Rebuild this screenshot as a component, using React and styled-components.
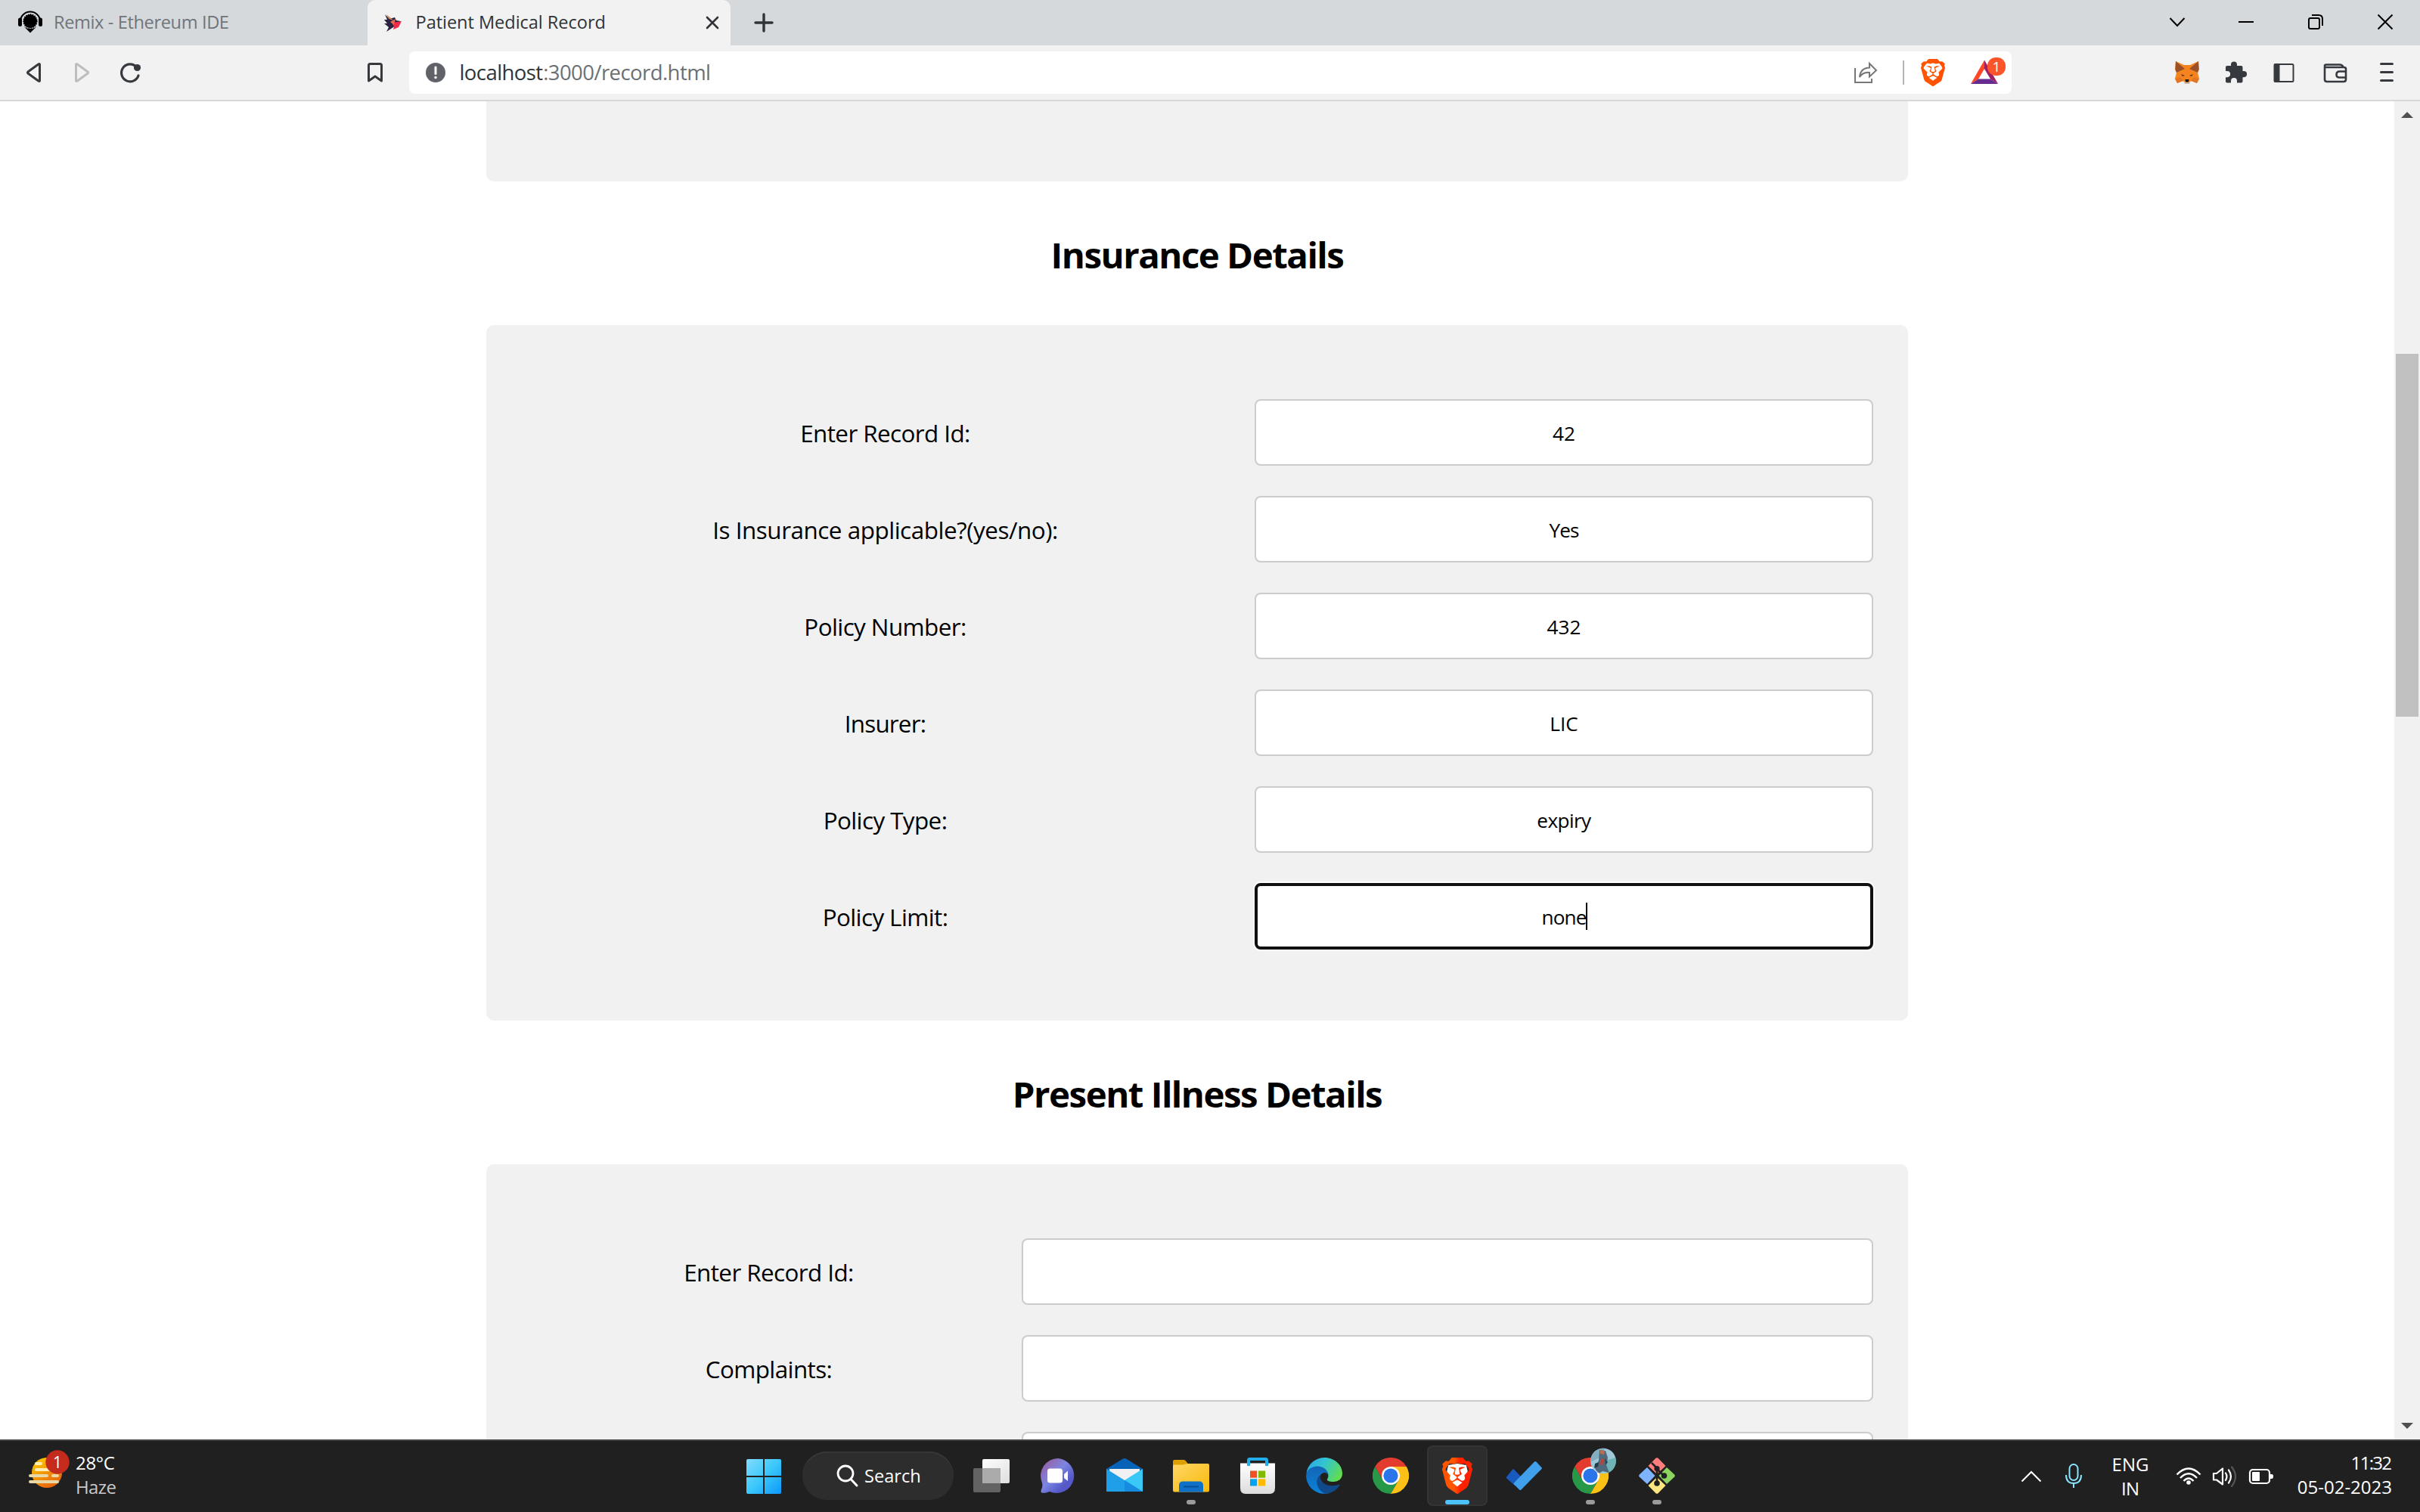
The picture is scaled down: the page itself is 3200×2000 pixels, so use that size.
import React from "react";
import styled, { createGlobalStyle } from "styled-components";
import { SiBrave } from "react-icons/si";

const Global = createGlobalStyle`
  html, body { margin: 0; padding: 0; background: #fff; overflow: hidden; }
  *, *::before, *::after { box-sizing: border-box; }
  body { font-family: "Open Sans", "Noto Sans", sans-serif; color: #000; }
  svg { display: block; flex: none; }
`;

const Window = styled.div`
  width: 3200px;
  height: 2000px;
  display: flex;
  flex-direction: column;
  overflow: hidden;
`;

/* ---------- browser chrome ---------- */
const TabStrip = styled.div`
  height: 60px;
  flex: none;
  display: flex;
  align-items: center;
  background: #d5d9dc;
`;
const Tab = styled.div`
  width: ${(p) => p.$width}px;
  height: 60px;
  display: flex;
  align-items: center;
  padding-left: ${(p) => p.$pad}px;
  background: ${(p) => (p.$active ? "#f2f2f2" : "transparent")};
  border-radius: ${(p) => (p.$active ? "10px 10px 0 0" : "0")};
`;
const Text = styled.span`
  flex: none;
  white-space: nowrap;
  font-size: ${(p) => p.$size}px;
  line-height: ${(p) => p.$line || 40}px;
  letter-spacing: ${(p) => p.$track || 0}px;
  color: ${(p) => p.$color || "#000"};
  margin-left: ${(p) => p.$left || 0}px;
  margin-right: ${(p) => -(p.$track || 0)}px;
  padding-bottom: ${(p) => p.$lift || 0}px;
`;
const Slot = styled.div`
  flex: none;
  margin-left: ${(p) => p.$left || 0}px;
`;
const Spacer = styled.div`
  flex: 1;
`;
const Toolbar = styled.div`
  height: 74px;
  flex: none;
  display: flex;
  align-items: center;
  background: #f2f2f2;
  border-bottom: 2px solid #d5d9dc;
`;
const AddressBar = styled.div`
  width: 2119px;
  height: 56px;
  margin-left: 34px;
  display: flex;
  align-items: center;
  background: #fff;
  border-radius: 8px;
`;
const Divider = styled.div`
  width: 2px;
  height: 32px;
  margin-left: 32px;
  background: #b1b6ba;
`;

/* ---------- page ---------- */
const Viewport = styled.div`
  height: 1770px;
  flex: none;
  display: flex;
  overflow: hidden;
`;
const Page = styled.main`
  width: 3166px;
  height: 1770px;
  overflow: hidden;
  display: flex;
  flex-direction: column;
  align-items: center;
`;
const Card = styled.section`
  width: 1880px;
  flex: none;
  background: #f1f1f1;
  border-radius: ${(p) => (p.$cut ? "0 0 10px 10px" : "10px")};
  height: ${(p) => (p.$height ? p.$height + "px" : "auto")};
  padding: ${(p) => (p.$cut ? "0" : "98px 46px 94px 40px")};
  display: flex;
  flex-direction: column;
  gap: 40px;
`;
const Heading = styled.h2`
  margin: 0;
  height: 190px;
  flex: none;
  padding-top: 4px;
  font-size: 47.4px;
  line-height: 186px;
  font-weight: 700;
  letter-spacing: -1.5px;
`;
const Row = styled.div`
  display: grid;
  grid-template-columns: ${(p) => p.$label}px 1fr;
  height: 88px;
  flex: none;
`;
const Label = styled.label`
  text-align: center;
  font-size: 31.4px;
  line-height: 88px;
  padding-top: 1px;
  padding-right: 1px;
  white-space: nowrap;
  letter-spacing: ${(p) => p.$track || -0.58}px;
`;
const Field = styled.div`
  height: 88px;
  background: #fff;
  border: 2px solid #ccc;
  border-radius: 8px;
  display: flex;
  justify-content: center;
  font-size: 26.2px;
  line-height: 86px;
  letter-spacing: ${(p) => p.$track || 0}px;
  ${(p) =>
    p.$focus &&
    `border: 4px solid #101010; line-height: 82px; box-shadow: 0 0 0 2px #fff;`}
`;
const Caret = styled.i`
  width: 2px;
  height: 36px;
  margin-top: 22px;
  margin-right: -2px;
  background: #000;
`;
const Scrollbar = styled.div`
  width: 34px;
  background: #f1f1f1;
  display: flex;
  flex-direction: column;
  align-items: center;
`;
const Thumb = styled.div`
  width: 30px;
  height: 480px;
  margin: 312px 0 934px;
  flex: none;
  background: #c1c1c1;
`;
const ArrowUp = styled.div`
  border: 8px solid transparent;
  border-top: 0;
  border-bottom-color: #505050;
  margin-top: 14px;
`;
const ArrowDown = styled.div`
  border: 8px solid transparent;
  border-bottom: 0;
  border-top-color: #505050;
`;

/* ---------- taskbar ---------- */
const Taskbar = styled.footer`
  height: 96px;
  flex: none;
  display: flex;
  align-items: center;
  background: #202020;
  border-top: 2px solid #424242;
  color: #fff;
`;
const Stack = styled.div`
  display: flex;
  flex-direction: column;
  align-items: ${(p) => p.$align || "flex-start"};
  width: ${(p) => (p.$width ? p.$width + "px" : "auto")};
  margin-left: ${(p) => p.$left || 0}px;
  padding-bottom: ${(p) => p.$lift || 0}px;
  flex: none;
`;
const SearchPill = styled.div`
  width: 200px;
  height: 64px;
  margin: 0 6px 2px 8px;
  border-radius: 32px;
  background: #2d2d2d;
  box-shadow: inset 0 2px 0 #373737;
  display: flex;
  align-items: center;
  flex: none;
`;
const AppSlot = styled.div`
  width: 88px;
  height: 94px;
  flex: none;
  display: flex;
  flex-direction: column;
  align-items: center;
`;
const AppTile = styled.div`
  width: 80px;
  height: 80px;
  margin-top: 6px;
  border-radius: 8px;
  display: flex;
  flex-direction: column;
  align-items: center;
  justify-content: flex-end;
  background: ${(p) => (p.$active ? "#2d2d2d" : "transparent")};
  box-shadow: ${(p) => (p.$active ? "inset 0 0 0 2px #343434" : "none")};
`;
const AppMark = styled.div`
  width: ${(p) => (p.$kind === "active" ? 32 : 12)}px;
  height: 6px;
  border-radius: 3px;
  margin: 8px 0 2px;
  background: ${(p) =>
    p.$kind === "active" ? "#4cc2ff" : p.$kind === "open" ? "#9a9a9a" : "transparent"};
`;

const Glyph = ({ box, children, left }) => {
  const [x, y, w, h] = box;
  return (
    <Slot $left={left}>
      <svg width={w} height={h} viewBox={`${x} ${y} ${w} ${h}`} fill="none">
        {children}
      </svg>
    </Slot>
  );
};

const Lion = ({ w, h, gradient, id }) => (
  <svg width={w} height={h} viewBox="1.8 0 20.4 24" preserveAspectRatio="none">
    <defs>
      <linearGradient id={id} x1="0" x2="1" y1="0" y2="0">
        <stop offset="0.4" stopColor={gradient[0]} />
        <stop offset="0.6" stopColor={gradient[1]} />
      </linearGradient>
    </defs>
    <path d="M6 5 12 4 18 5 19 9 17 16 12 20 7 16 5 9Z" fill="#fff" />
    <SiBrave size={24} fill={`url(#${id})`} />
  </svg>
);

const Chrome = () => (
  <svg width="48" height="48" viewBox="0 0 48 48">
    <path d="M3.2 12A24 24 0 0 1 44.8 12L24 12 13.6 30Z" fill="#e33b2e" />
    <path d="M24 48A24 24 0 0 1 3.2 12L13.6 30 24 36 34.4 30Z" fill="#279847" />
    <path d="M24 12H44.8A24 24 0 0 1 24 48L34.4 30Z" fill="#fbc116" />
    <circle cx="24" cy="24" r="12" fill="#fff" />
    <circle cx="24" cy="24" r="9.6" fill="#2a75ea" />
  </svg>
);

const apps = [
  {
    name: "task-view",
    icon: (
      <svg width="48" height="48" viewBox="0 0 48 48">
        <defs>
          <linearGradient id="tv" x1="0" y1="0" x2="1" y2="1">
            <stop stopColor="#fff" />
            <stop offset="1" stopColor="#dedede" />
          </linearGradient>
        </defs>
        <rect x="12" y="2" width="36" height="32" rx="2" fill="url(#tv)" />
        <rect x="0" y="14" width="36" height="32" rx="2" fill="#6f6f6f" fillOpacity=".86" />
        <path d="M12 14H36V34H12Z" fill="#ababab" />
      </svg>
    ),
  },
  {
    name: "chat",
    icon: (
      <svg width="48" height="48" viewBox="0 0 48 48">
        <defs>
          <linearGradient id="ch" x1="0.1" y1="0.2" x2="0.7" y2="0.8">
            <stop stopColor="#9465ae" />
            <stop offset=".5" stopColor="#7c86e2" />
            <stop offset="1" stopColor="#5558c8" />
          </linearGradient>
        </defs>
        <path d="M24 1A23 23 0 1 1 13 45C8 47 5 47 2.500 46.500 1 46 1.500 44 2 42 4 38 3.500 35 2.500 32A23 23 0 0 1 24 1Z" fill="url(#ch)" />
        <rect x="10" y="14.500" width="20" height="19" rx="3.500" fill="#fff" />
        <path d="M32 22 37 17.500V31L32 27Z" fill="#fff" />
      </svg>
    ),
  },
  {
    name: "mail",
    icon: (
      <svg width="48" height="48" viewBox="0 0 48 48">
        <path d="M0 15 22 1.500Q24 0.500 26 1.500L48 15V24H0Z" fill="#0763b8" />
        <path d="M4 15H44V30L24 34 4 30Z" fill="#f1f1f3" />
        <path d="M48 15V45H0Z" fill="#3ac8f6" />
        <path d="M4 15H44L24 29.500Z" fill="#f1f1f3" />
        <path d="M0 15 48 45H0Z" fill="#1f9fe8" />
        <path d="M24 30 48 45H24Z" fill="#178be0" />
      </svg>
    ),
  },
  {
    name: "explorer",
    mark: "open",
    icon: (
      <svg width="48" height="48" viewBox="0 0 48 48">
        <defs>
          <linearGradient id="fo" x1="0" y1="0" x2="1" y2="1">
            <stop stopColor="#ffd766" />
            <stop offset="1" stopColor="#fab90a" />
          </linearGradient>
        </defs>
        <path d="M0 5Q0 3 2 3H14Q16 3 17 4.500L20 8.500 16 14H0Z" fill="#dda000" />
        <path d="M0 11Q0 9.500 2 9.500H13L19 8H46Q48 8 48 10V43Q48 45.500 46 45.500H2Q0 45.500 0 43Z" fill="url(#fo)" />
        <path d="M8 45.500V37Q8 31.500 13 31.500H35Q40 31.500 40 37V45.500Z" fill="#0e70c8" />
        <path d="M15 38.500H33" stroke="#0b4f93" strokeWidth="2.200" strokeLinecap="round" />
      </svg>
    ),
  },
  {
    name: "store",
    icon: (
      <svg width="48" height="48" viewBox="0 0 48 48">
        <defs>
          <linearGradient id="st" x1="0" y1="0" x2="0" y2="1">
            <stop stopColor="#fff" />
            <stop offset="1" stopColor="#dcdcdc" />
          </linearGradient>
        </defs>
        <path d="M1 7.500H47V40Q47 48 40 48H8Q1 48 1 40Z" fill="url(#st)" />
        <path d="M12 11V3.500Q12 2 13.500 2H34.500Q36 2 36 3.500V11" fill="none" stroke="#22aeea" strokeWidth="4" />
        <path d="M14 17.500h9.200v9.200H14z" fill="#f25022" />
        <path d="M25 17.500h9.200v9.200H25z" fill="#7fba00" />
        <path d="M14 28.300h9.200v9.200H14z" fill="#00a4ef" />
        <path d="M25 28.300h9.200v9.200H25z" fill="#ffb900" />
      </svg>
    ),
  },
  {
    name: "edge",
    icon: (
      <svg width="48" height="48" viewBox="0 0 48 48">
        <defs>
          <linearGradient id="e1" x1="0" y1="0.2" x2="1" y2="0.6">
            <stop stopColor="#2aa9e8" />
            <stop offset=".45" stopColor="#34c4d0" />
            <stop offset="1" stopColor="#62dd4e" />
          </linearGradient>
          <linearGradient id="e2" x1="0" y1="0" x2="0" y2="1">
            <stop stopColor="#1464b4" />
            <stop offset="1" stopColor="#0a84dc" />
          </linearGradient>
        </defs>
        <path d="M0.500 21A24 23 0 0 1 24 0C38 0 48 10 48 21 48 28 43 32 36 32 31 32 27 30.500 28 28.500 30 26 30 22 27 18 22 11 8 11 0.500 21Z" fill="url(#e1)" />
        <path d="M0.500 21C2 15 9 11.500 15 11.500 23 11.500 29.500 17 29.500 23 27 18 19 19 18 27 17 37 26 46.500 32 46.500A24 24 0 0 1 0.300 27Q0 24 .5 21Z" fill="url(#e2)" />
        <path d="M18.500 23C12 28 13 40 22 46 24 47.500 28 48 31 47 37 45 41 42 44 37.500 45 36 44 35.500 42.500 36 31 40 18 35 18.500 23Z" fill="#114a8b" />
      </svg>
    ),
  },
  { name: "chrome", icon: <Chrome /> },
  {
    name: "brave",
    mark: "active",
    icon: <Lion id="lionTask" w={40} h={48} gradient={["#ff5500", "#ff2000"]} />,
  },
  {
    name: "todo",
    icon: (
      <svg width="48" height="48" viewBox="0 0 48 48">
        <path d="M1.200 25.500 9 15.800Q10 14.800 11 15.800L21 26 12 37 1.200 27.500Q0.300 26.500 1.200 25.500Z" fill="#185abd" />
        <path d="M11 33.500 38 5.600Q39.200 4.600 40.400 5.600L47.300 12.900Q48.300 14 47.300 15.200L20.500 42.500Q19.300 43.600 18.100 42.500L11 35.500Q10.200 34.500 11 33.500Z" fill="#41a0ec" />
      </svg>
    ),
  },
  {
    name: "chrome-profile",
    mark: "open",
    icon: (
      <svg width="48" height="48" viewBox="0 0 48 48" overflow="visible">
        <Chrome />
        <clipPath id="av">
          <circle cx="41" cy="4.500" r="16.800" />
        </clipPath>
        <g clipPath="url(#av)">
          <rect x="24" y="-13" width="34" height="36" fill="#9fc9da" />
          <path d="M24 -13H44L36 0 24 6Z" fill="#84adc0" />
          <path d="M44 4 58 0V23H46Z" fill="#6fb3b6" />
          <path d="M36 -10 44 -9 47 0 45 10 49 20 40 18 34 22 30 14 35 4Z" fill="#4e6a7c" />
          <path d="M37 -10 43 -9 42 -4 37 -5Z" fill="#b96f4d" />
          <path d="M38 1 42 2 41 10 37 9Z" fill="#b5453b" />
          <path d="M30 8 35 6 34 12 29 14Z" fill="#253b4c" />
          <path d="M43 1 47 6 44 10Z" fill="#2c4459" />
          <path d="M26 15 34 19 30 22Z" fill="#e4ecec" />
        </g>
      </svg>
    ),
  },
  {
    name: "git",
    mark: "open",
    icon: (
      <svg width="48" height="48" viewBox="0 0 48 48">
        <path d="M22.500 .8Q24 -.5 25.500 .8L35.500 11 24 22 12.500 11Z" fill="#ff7d7d" />
        <path d="M11 13 21.500 24 11 35 .8 25.500Q-.4 24 .8 22.500Z" fill="#80b3ff" />
        <path d="M37 13 47.200 22.500Q48.400 24 47.200 25.500L37 35 26.500 24Z" fill="#8dd35f" />
        <path d="M24 26 35.500 37 25.500 47.200Q24 48.500 22.500 47.200L12.500 37Z" fill="#ffe680" />
        <g stroke="#202020" strokeWidth="2.600" fill="none">
          <path d="M17 7 24 14V34M24 15 33 24" />
        </g>
        <circle cx="24" cy="14.500" r="3.600" fill="#202020" />
        <circle cx="33.500" cy="24" r="3.800" fill="#202020" />
        <circle cx="24" cy="34" r="3.800" fill="#202020" />
      </svg>
    ),
  },
];

const insurance = [
  { label: "Enter Record Id:", value: "42" },
  { label: "Is Insurance applicable?(yes/no):", track: -0.46, value: "Yes", valueTrack: -1 },
  { label: "Policy Number:", value: "432" },
  { label: "Insurer:", value: "LIC", track: -0.8 },
  { label: "Policy Type:", value: "expiry", valueTrack: -0.6 },
  { label: "Policy Limit:", value: "none", valueTrack: -0.9, focus: true },
];
const illness = ["Enter Record Id:", "Complaints:", ""];

const ink = "#363a3e";

export default function App() {
  return (
    <Window>
      <Global />
      <TabStrip>
        <Tab $width={486} $pad={24}>
          <Glyph box={[24, 14, 32, 32]}>
            <path d="M27 28A13 12.500 0 0 1 53 28" stroke="#000" strokeWidth="2" />
            <circle cx="40" cy="28" r="9" fill="#000" />
            <circle cx="40" cy="28" r="9" stroke="#000" strokeWidth="1.500" strokeDasharray="1.500 1.500" />
            <rect x="24" y="23.500" width="5" height="11.500" rx="2.500" fill="#000" />
            <rect x="51" y="23.500" width="5" height="11.500" rx="2.500" fill="#000" />
            <path d="M32 35.500Q40 40.500 48 35.500L40 43.500Z" fill="#000" />
          </Glyph>
          <Text $size={23.6} $color="#70757a" $left={15} $lift={3} $track={-0.38}>Remix - Ethereum IDE</Text>
        </Tab>
        <Tab $width={480} $pad={20} $active>
          <Glyph box={[506, 14, 26, 32]}>
            <path d="M509 19 515 25 522 23 524 27 530 28 524 33 520 36 511 42 514 36 508 31 512 31 508 26 512 26Z" fill="#2a2344" />
            <path d="M511 19 517 24 520 27 514 25Z" fill="#d4895c" />
            <path d="M518 30 526 29 531 28 527 36 520 39 521 35Z" fill="#f02b4a" />
            <path d="M516 29 523 25 521 33Z" fill="#e66a45" />
          </Glyph>
          <Text $size={23.6} $color="#303438" $left={17.5} $lift={3} $track={-0.06}>Patient Medical Record</Text>
          <Spacer />
          <Glyph box={[933, 21, 18, 18]}>
            <path d="M935 23 949 37M949 23 935 37" stroke="#303438" strokeWidth="2.600" strokeLinecap="round" />
          </Glyph>
          <Slot $left={15} />
        </Tab>
        <Glyph box={[997, 17, 26, 26]} left={31}>
          <path d="M1010 19V41M999 30H1021" stroke="#303438" strokeWidth="3.400" strokeLinecap="round" />
        </Glyph>
        <Spacer />
        <Glyph box={[2868, 18, 22, 24]}>
          <path d="M2869.500 24 2879 34 2888.500 24" stroke="#000" strokeWidth="2" />
        </Glyph>
        <Glyph box={[2960, 18, 20, 24]} left={70}>
          <path d="M2960 29H2980" stroke="#000" strokeWidth="2" />
        </Glyph>
        <Glyph box={[3052, 18, 20, 24]} left={72}>
          <rect x="3053" y="24" width="14" height="14" rx="2" stroke="#000" strokeWidth="2" />
          <path d="M3057 20H3066Q3071 20 3071 25V34" stroke="#000" strokeWidth="2" />
        </Glyph>
        <Glyph box={[3143, 18, 22, 24]} left={71}>
          <path d="M3144.500 19.500 3163.500 38.500M3163.500 19.500 3144.500 38.500" stroke="#000" strokeWidth="2" />
        </Glyph>
        <Slot $left={35} />
      </TabStrip>

      <Toolbar>
        <Glyph box={[34, 80, 22, 32]} left={34}>
          <path d="M52.500 85.500V106.500Q52.500 108 51 107.200L37 97Q36 96 37 95L51 84.800Q52.500 84 52.500 85.500Z" stroke={ink} strokeWidth="3" />
        </Glyph>
        <Glyph box={[98, 80, 22, 32]} left={42}>
          <path d="M100.500 85.500V106.500Q100.500 108 102 107.200L116 97Q117 96 116 95L102 84.800Q100.500 84 100.500 85.500Z" stroke="#bcbdbe" strokeWidth="3" />
        </Glyph>
        <Glyph box={[158, 80, 30, 32]} left={38}>
          <path d="M178.500 85.800A11.500 11.500 0 1 0 183 99" stroke={ink} strokeWidth="3.200" strokeLinecap="round" transform="translate(0 1)" />
          <circle cx="181.500" cy="89.500" r="4.600" fill={ink} />
        </Glyph>
        <Glyph box={[485, 80, 22, 32]} left={297}>
          <path d="M487.500 86.500Q487.500 84.500 489.500 84.500H502.500Q504.500 84.500 504.500 86.500V107L496 101 487.500 107Z" stroke={ink} strokeWidth="3" strokeLinejoin="round" />
        </Glyph>
        <AddressBar>
          <Glyph box={[563, 82, 26, 28]} left={22}>
            <circle cx="576" cy="96" r="13" fill="#5f6368" />
            <path d="M576 89V97.500" stroke="#fff" strokeWidth="3" strokeLinecap="round" />
            <circle cx="576" cy="102.500" r="1.800" fill="#fff" />
          </Glyph>
          <Text $size={27.5} $color="#303438" $left={18.5} $lift={1} $track={-0.57}>localhost</Text>
          <Text $size={27.5} $color="#6b7075" $lift={1} $track={-0.57}>:3000/record.html</Text>
          <Spacer />
          <Glyph box={[2450, 80, 34, 32]}>
            <path d="M2453 90V109H2475V104" stroke="#777" strokeWidth="2" />
            <path d="M2459 102Q2460 90 2472 89.500V84L2481 93 2472 101.500V96Q2463 95 2459 102Z" stroke="#777" strokeWidth="2" strokeLinejoin="miter" />
          </Glyph>
          <Divider />
          <Slot $left={22}>
            <Lion id="lionBar" w={32} h={36} gradient={["#ff5500", "#ff5000"]} />
          </Slot>
          <Glyph box={[2606, 68, 48, 56]} left={34}>
            <path d="M2624 79.500 2606 111 2616 104.500 2624 91Z" fill="#ff4724" />
            <path d="M2624 79.500 2642 111 2632 104.500 2624 91Z" fill="#9e1f63" />
            <path d="M2606 111H2642L2632 104.500H2616Z" fill="#662d91" />
            <rect x="2628" y="76" width="24" height="24" rx="11" fill="#fb542b" />
            <text x="2640" y="95" textAnchor="middle" fontSize="19" fill="#fff">1</text>
          </Glyph>
          <Slot $left={6} />
        </AddressBar>
        <Glyph box={[2874, 78, 36, 36]} left={214}>
          <path d="M2877 81 2888 86H2896L2907 81 2908 92 2906 96 2908 104 2905 110 2898 107 2892 110 2886 107 2879 110 2876 104 2878 96 2876 92Z" fill="#f5841f" />
          <path d="M2877 81 2889 91 2878 96 2876.500 92Z" fill="#9b5127" />
          <path d="M2907 81 2895 91 2906 96 2907.500 92Z" fill="#9b5127" />
          <path d="M2876 104 2883 102 2887 107 2879 110ZM2908 104 2901 102 2897 107 2905 110Z" fill="#e17726" />
          <path d="M2884 98 2889 100 2886 101ZM2900 98 2895 100 2898 101Z" fill="#4a342a" />
          <path d="M2887 107 2890 109H2894L2897 107 2895 111H2889Z" fill="#c9b8a8" />
          <path d="M2889.500 105H2894.500L2894 108.500H2890Z" fill="#161616" />
        </Glyph>
        <Glyph box={[2942, 80, 30, 32]} left={32}>
          <path d="M2945 87H2950V85.500A4 4 0 0 1 2958 85.500V87H2963.500Q2965.500 87 2965.500 89V94H2967A4 4 0 0 1 2967 102.200H2965.500V107.500Q2965.500 109.500 2963.500 109.500H2958V107A4 4 0 0 0 2950 107V109.500H2945Q2943 109.500 2943 107.500V102.200H2945A4 4 0 0 0 2945 94H2943V89Q2943 87 2945 87Z" fill={ink} />
        </Glyph>
        <Glyph box={[3006, 80, 28, 32]} left={34}>
          <rect x="3007.500" y="85" width="25" height="23" rx="1.500" stroke={ink} strokeWidth="2" />
          <rect x="3007" y="84.500" width="7.500" height="24" fill={ink} />
        </Glyph>
        <Glyph box={[3071, 80, 34, 32]} left={37}>
          <path d="M3074 88V105Q3074 108 3077 108H3099Q3102 108 3102 105V91Q3102 89 3099 89H3076Q3074 89 3074 87 3074 85.500 3076 85.500H3094Q3097 85.500 3098.500 88.500" stroke={ink} strokeWidth="2.600" />
          <path d="M3102 94.500H3093.500Q3089.500 94.500 3089.500 98.700 3089.500 102.500 3093.500 102.500H3102" stroke={ink} strokeWidth="2.600" />
        </Glyph>
        <Glyph box={[3146, 80, 20, 32]} left={41}>
          <path d="M3148.500 84.500H3163.500M3148.500 95.500H3163.500M3148.500 106.500H3163.500" stroke={ink} strokeWidth="3" strokeLinecap="round" />
        </Glyph>
      </Toolbar>

      <Viewport>
        <Page>
          <Card $cut $height={106} />
          <Heading>Insurance Details</Heading>
          <Card>
            {insurance.map((row) => (
              <Row key={row.label} $label={976}>
                <Label $track={row.track}>{row.label}</Label>
                <Field $focus={row.focus} $track={row.valueTrack}>
                  <span>{row.value}</span>
                  {row.focus && <Caret />}
                </Field>
              </Row>
            ))}
          </Card>
          <Heading>Present Illness Details</Heading>
          <Card>
            {illness.map((label) => (
              <Row key={label} $label={668}>
                <Label>{label}</Label>
                <Field />
              </Row>
            ))}
          </Card>
        </Page>
        <Scrollbar>
          <ArrowUp />
          <Thumb />
          <ArrowDown />
        </Scrollbar>
      </Viewport>

      <Taskbar>
        <Glyph box={[36, 1910, 58, 86]} left={36}>
          <defs>
            <linearGradient id="sun" x1="0" y1="0" x2="0.6" y2="1">
              <stop stopColor="#ffd400" />
              <stop offset="1" stopColor="#e8650c" />
            </linearGradient>
          </defs>
          <circle cx="62" cy="1948" r="20" fill="url(#sun)" />
          <g stroke="#ead9a8" strokeWidth="4" strokeLinecap="round">
            <path d="M48 1936H54M48 1944H70" stroke="#fdeeb8" />
            <path d="M40 1952H62M70 1952H76M40 1960H76" />
          </g>
          <circle cx="76" cy="1934" r="15.700" fill="#c42b1c" />
          <text x="76" y="1941.500" textAnchor="middle" fontSize="21" fill="#fff">1</text>
        </Glyph>
        <Stack $left={6} $width={60} $lift={4}>
          <Text $size={24} $line={32} $color="#fff" $track={-0.3}>28°C</Text>
          <Text $size={24} $line={32} $color="#c8c8c8" $track={-0.6}>Haze</Text>
        </Stack>
        <Slot $left={805}>
          <AppSlot>
            <svg width="48" height="94" viewBox="985 1906 48 94">
              <defs>
                <linearGradient id="win" gradientUnits="userSpaceOnUse" x1="986" y1="1930" x2="1033" y2="1976">
                  <stop stopColor="#84dcff" />
                  <stop offset=".5" stopColor="#3cc8fb" />
                  <stop offset="1" stopColor="#0c98fa" />
                </linearGradient>
              </defs>
              <path d="M989 1930H1009V1952H987V1932Q987 1930 989 1930ZM1011 1930H1031Q1033 1930 1033 1932V1952H1011ZM987 1954H1009V1976H989Q987 1976 987 1974ZM1011 1954H1033V1974Q1033 1976 1031 1976H1011Z" fill="url(#win)" />
            </svg>
          </AppSlot>
        </Slot>
        <SearchPill>
          <Glyph box={[1105, 1936, 32, 32]} left={44}>
            <circle cx="1118" cy="1949" r="10" stroke="#fff" strokeWidth="2.800" />
            <path d="M1125 1956.500 1133 1965" stroke="#fff" strokeWidth="3" strokeLinecap="round" />
          </Glyph>
          <Text $size={23.6} $color="#fff" $left={6}>Search</Text>
        </SearchPill>
        {apps.map((app) => (
          <AppSlot key={app.name}>
            <AppTile $active={app.mark === "active"}>
              {app.icon}
              <AppMark $kind={app.mark} />
            </AppTile>
          </AppSlot>
        ))}
        <Spacer />
        <Glyph box={[2672, 1936, 28, 32]}>
          <path d="M2673.500 1958.500 2686 1946 2698.500 1958.500" stroke="#fff" strokeWidth="2" />
        </Glyph>
        <Glyph box={[2730, 1934, 24, 38]} left={30}>
          <g stroke="#8ae4ff" strokeWidth="2">
            <rect x="2736.500" y="1937" width="11" height="21" rx="5.500" />
            <path d="M2732 1951Q2732 1962 2742 1962 2752 1962 2752 1951M2742 1962V1968" />
          </g>
        </Glyph>
        <Stack $left={31} $width={64} $align="center">
          <Text $size={24} $line={32} $color="#fff">ENG</Text>
          <Text $size={24} $line={32} $color="#fff" $track={-0.6}>IN</Text>
        </Stack>
        <Glyph box={[2876, 1936, 36, 32]} left={27}>
          <g stroke="#fff" strokeWidth="2.400">
            <path d="M2878.500 1949.500Q2894 1933.500 2909.500 1949.500" />
            <path d="M2883 1954Q2894 1942.500 2905 1954" />
            <path d="M2887.500 1958Q2894 1951 2900.500 1958" />
          </g>
          <circle cx="2894" cy="1960" r="2.800" fill="#fff" />
        </Glyph>
        <Glyph box={[2924, 1936, 36, 32]} left={12}>
          <path d="M2927 1948H2931L2939 1941.500V1962.500L2931 1956.500H2927Z" stroke="#fff" strokeWidth="2.200" strokeLinejoin="round" />
          <path d="M2943 1947.500Q2946 1952 2943 1957M2947 1943.500Q2953 1952 2947 1960.500" stroke="#fff" strokeWidth="2.200" strokeLinecap="round" />
          <path d="M2951 1939.500Q2961 1952 2951 1965" stroke="#555" strokeWidth="2.200" strokeLinecap="round" />
        </Glyph>
        <Glyph box={[2973, 1936, 34, 32]} left={13}>
          <rect x="2975" y="1943" width="26" height="18" rx="4" stroke="#fff" strokeWidth="2.200" />
          <rect x="2978" y="1946" width="10" height="12" rx="1" fill="#fff" />
          <path d="M3002 1949H3004Q3006 1949 3006 1952 3006 1955 3004 1955H3002Z" fill="#fff" />
        </Glyph>
        <Stack $left={29} $width={127} $align="flex-end" $lift={4}>
          <Text $size={24} $line={32} $color="#fff" $track={-1.7}>11:32</Text>
          <Text $size={24} $line={32} $color="#fff">05-02-2023</Text>
        </Stack>
        <Slot $left={37} />
      </Taskbar>
    </Window>
  );
}
